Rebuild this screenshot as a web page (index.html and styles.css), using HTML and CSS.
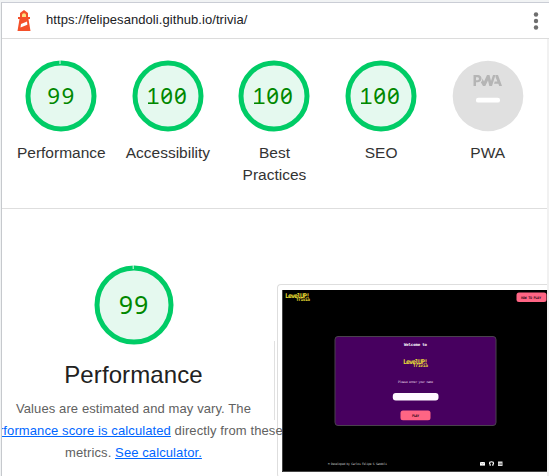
FILE: index.html
```
<!DOCTYPE html>
<html lang="en">
<head>
<meta charset="utf-8">
<title>Lighthouse report</title>
<link rel="stylesheet" href="styles.css">
</head>
<body>
<div class="panel">
  <header class="topbar">
    <svg class="logo" width="14" height="21" viewBox="0 0 14 21">
      <path d="M7 0 11 3V7H13V9H11.500L13.500 21H.5L2.500 9H1V7H3V3Z" fill="#f4502a"/>
      <path d="M5 7V5Q5 3.200 7 3.200T9 5V7Z" fill="#ffe082"/>
      <path d="M4 14 10 11.500 10.400 14.700 3.500 17.500Z" fill="#fff"/>
    </svg>
    <span class="url">https://felipesandoli.github.io/trivia/</span>
    <svg class="menu" width="6" height="20" viewBox="0 0 6 20" fill="#6e6e6e">
      <circle cx="3" cy="3.500" r="2.200"/><circle cx="3" cy="10" r="2.200"/><circle cx="3" cy="16.500" r="2.200"/>
    </svg>
  </header>
  <main class="report">
    <section class="scores">
      <div class="gauge">
        <svg width="72" height="72" viewBox="0 0 72 72">
          <circle class="ring" cx="36" cy="36" r="33"/><path class="gap" d="M35 0V4"/>
          <text class="num" x="22.300" y="44" textLength="27">99</text>
        </svg>
        <span class="label">Performance</span>
      </div>
      <div class="gauge">
        <svg width="72" height="72" viewBox="0 0 72 72">
          <circle class="ring" cx="36" cy="36" r="33"/>
          <text class="num" x="14.500 28.300 42" y="44">100</text><path class="foot" d="M16 43.200H26.500"/>
        </svg>
        <span class="label">Accessibility</span>
      </div>
      <div class="gauge">
        <svg width="72" height="72" viewBox="0 0 72 72">
          <circle class="ring" cx="36" cy="36" r="33"/>
          <text class="num" x="14.500 28.300 42" y="44">100</text><path class="foot" d="M16 43.200H26.500"/>
        </svg>
        <span class="label">Best Practices</span>
      </div>
      <div class="gauge">
        <svg width="72" height="72" viewBox="0 0 72 72">
          <circle class="ring" cx="36" cy="36" r="33"/>
          <text class="num" x="14.500 28.300 42" y="44">100</text><path class="foot" d="M16 43.200H26.500"/>
        </svg>
        <span class="label">SEO</span>
      </div>
      <div class="gauge">
        <svg width="72" height="72" viewBox="0 0 72 72">
          <circle cx="36" cy="36" r="35.300" fill="#e0e0e0"/>
          <g fill="#b5b5b5">
            <path fill-rule="evenodd" d="M21.500 15H26.500Q29.500 15.500 29.500 18.500T26 22.300H24V26H21.500ZM24 17.200V20.200H25.800Q27 20 27 18.700T25.800 17.200Z"/>
            <path d="M30.500 18.500 32 21.500 35 15H37.500L39 21 41 15H43.500L40 26H37.300L36 20.500 33.300 26H31L28.800 22.300Q30.500 21 30.500 18.500Z"/>
            <path d="M43.500 15H46L50 26H47.200L46.400 23.800H42L42.800 21.600H45.400L43.500 17Z"/>
          </g>
          <rect x="24" y="37.800" width="24" height="4.800" rx="2.200" fill="#fff"/>
        </svg>
        <span class="label">PWA</span>
      </div>
    </section>
    <section class="detail">
      <div class="summary">
        <svg width="80" height="80" viewBox="0 0 80 80">
          <circle class="ring" cx="40" cy="40" r="37"/><path class="gap" d="M39.200 0V4"/>
          <text class="num big" x="24.800" y="49" textLength="29.500">99</text>
        </svg>
        <h1>Performance</h1>
        <p>Values are estimated and may vary. The<br><a>performance score is calculated</a> directly from these<br>metrics. <a>See calculator.</a></p>
      </div>
      <div class="rule"></div>
      <div class="frame">
        <svg class="shot" width="265" height="182" viewBox="282 290 265 182">
          <rect x="282" y="290" width="265" height="182" fill="#000"/>
          <path d="M282.500 290V471.500H547" fill="none" stroke="#444"/>
          <g class="brand">
            <text x="285" y="297.500" font-size="6.500" textLength="25">LevelUP!</text>
            <text x="296" y="301" font-size="4.500" textLength="14">Trivia</text>
          </g>
          <rect x="516.500" y="292.500" width="30" height="9.500" rx="2.500" fill="#ff6584"/>
          <text class="mono" x="521" y="299" font-size="3.500" textLength="20" fill="#300b18">HOW TO PLAY</text>
          <rect x="335" y="336.500" width="161" height="89" rx="3" fill="#47005f" stroke="#4a424d"/>
          <text class="mono" x="404" y="346" font-size="4" textLength="23" fill="#fff">Welcome to</text>
          <g class="brand">
            <text x="403" y="363.500" font-size="6.500" textLength="25">LevelUP!</text>
            <text x="413" y="367" font-size="4.500" textLength="15">Trivia</text>
          </g>
          <text class="thin" x="398" y="383" font-size="3" textLength="35" fill="#e6dce9">Please enter your name</text>
          <rect x="392.800" y="393" width="45.700" height="7.500" rx="3" fill="#fff8ff"/>
          <rect x="400.500" y="410.500" width="30" height="9.800" rx="2.500" fill="#ff6584"/>
          <text class="mono" x="412" y="417" font-size="3.500" textLength="7" fill="#300b18">PLAY</text>
          <text class="thin" x="328" y="465" font-size="3" textLength="59" fill="#ccc">© Developed by Carlos Felipe S Sandoli</text>
          <rect x="480" y="462" width="5" height="3.600" fill="#fff"/><path d="M480 462.300 482.500 464 485 462.300" fill="none" stroke="#777" stroke-width=".5"/>
          <path d="M490.200 465.800V464.700Q489.200 463.500 489.800 462.200 491.500 461.300 493.200 462.200 494 463.700 492.800 464.700V465.800" fill="none" stroke="#fff" stroke-width="1.200"/>
          <rect x="498" y="461.500" width="4.500" height="4.500" fill="#ddd"/><path d="M499.200 463V465M500.500 465V463.300H501.500V465" fill="none" stroke="#555" stroke-width=".6"/>
        </svg>
      </div>
    </section>
  </main>
</div>
</body>
</html>
```
FILE: styles.css
```
* { box-sizing: border-box; }
body {
  margin: 0;
  width: 549px;
  height: 476px;
  overflow: hidden;
  background: #f1f3f4;
  font-family: "Liberation Sans", Arial, sans-serif;
}
.panel {
  height: 474px;
  margin: 2px 0 0 1px;
  border-top: 1px solid #cacdd5;
  border-left: 1px solid #c6c9cd;
  background: #fff;
  overflow: hidden;
}
.topbar {
  display: flex;
  align-items: center;
  height: 36px;
  padding: 0 10px 0 15px;
  border-bottom: 1px solid #dcdcdc;
}
.url {
  flex: 1;
  margin-left: 15px;
  padding-bottom: 2px;
  font-size: 13px;
  letter-spacing: .07px;
  color: #202124;
}
.report {
  height: 437px;
  border-right: 2px solid #f1f1f1;
}
.scores {
  display: grid;
  grid-template-columns: repeat(5, 106.600px);
  height: 170px;
  padding: 21px 0 0 6px;
  border-bottom: 1px solid #dedede;
}
.gauge {
  display: flex;
  flex-direction: column;
  align-items: center;
}
.label {
  width: 90px;
  margin-top: 10px;
  font-size: 15.500px;
  line-height: 22px;
  text-align: center;
  color: #333;
}
.ring { fill: #e5f9ef; stroke: #0c6; stroke-width: 5; }
.gap { stroke: #e5f9ef; stroke-width: 1; }
.num {
  font-family: "Noto Sans", sans-serif;
  font-size: 22.400px;
  font-feature-settings: "zero";
  fill: #080;
}
.big { font-size: 25px; }
.foot { stroke: #080; stroke-width: 1.600; }
.detail {
  display: flex;
  align-items: flex-start;
  height: 267px;
}
.summary {
  display: flex;
  flex-direction: column;
  align-items: center;
  flex: none;
  width: 263px;
  padding-top: 56px;
}
h1 {
  margin: 12px 0 0;
  font-size: 24px;
  font-weight: 400;
  letter-spacing: .1px;
  line-height: 36px;
  color: #212121;
}
p {
  position: relative;
  z-index: 1;
  margin: 5px 0 0;
  font-size: 13px;
  letter-spacing: .1px;
  line-height: 22px;
  text-align: center;
  white-space: nowrap;
  color: #616161;
}
a { color: #06f; text-decoration: underline; }
.rule {
  flex: none;
  width: 1px;
  height: 79px;
  margin: 132px 2px 0 9px;
  background: #e0e0e0;
}
.frame {
  flex: none;
  width: 270px;
  height: 194px;
  margin-top: 75px;
  padding: 5px 0 0 4px;
  border: 1px solid #dedede;
  border-right: 0;
  border-radius: 4px 0 0 4px;
  background: #fff;
}
.shot { display: block; position: relative; z-index: 2; }
.brand { font-family: "DejaVu Sans Mono", monospace; font-weight: 700; fill: #e8df35; }
.mono { font-family: "DejaVu Sans Mono", monospace; font-weight: 700; }
.thin { font-family: "DejaVu Sans Mono", monospace; }
```
